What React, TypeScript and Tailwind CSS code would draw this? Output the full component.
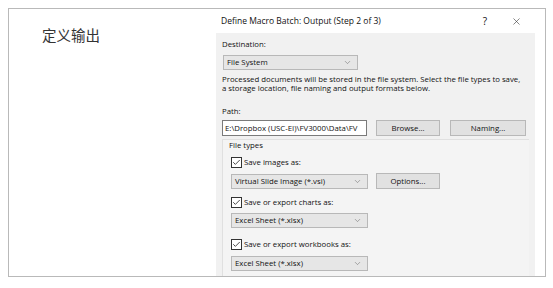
import { ChevronDown, Check, X } from "lucide-react";

const ui = { fontFamily: '"Open Sans", "DejaVu Sans", sans-serif' };

const Combo = ({ label, width }: { label: string; width: string }): JSX.Element => (
  <div
    className={`${width} h-[15px] flex items-center justify-between pl-[3px] pr-[5px] bg-[#e6e6e6] border border-[#b8b8b8] text-[#111]`}
  >
    <span>{label}</span>
    <ChevronDown className="w-[9px] h-[9px] text-[#666]" strokeWidth={1.4} />
  </div>
);

const Button = ({ label, width }: { label: string; width: string }): JSX.Element => (
  <div
    className={`${width} h-[16px] flex items-center justify-center bg-[#e1e1e1] border border-[#b8b8b8] text-[#111]`}
  >
    {label}
  </div>
);

const CheckRow = ({ label }: { label: string }): JSX.Element => (
  <div className="h-[11px] flex items-center gap-[2px] text-[#111]">
    <div className="w-[11px] h-[11px] border border-[#333] bg-white flex items-center justify-center">
      <Check className="w-[9px] h-[9px] text-[#222]" strokeWidth={2.2} />
    </div>
    <span>{label}</span>
  </div>
);

export default function App(): JSX.Element {
  return (
    <div className="w-[553px] h-[288px] bg-white pt-[8px] pl-[8px]">
      <div className="w-[538px] h-[269px] border border-[#b9b9b9] flex overflow-hidden">
        {/* left title */}
        <div className="w-[207px] shrink-0 pl-[33px] pt-[16px]">
          <div
            className="text-[14.5px] text-[#333] leading-[20px]"
            style={{ fontFamily: '"Noto Sans CJK SC", sans-serif' }}
          >
            定义输出
          </div>
        </div>

        {/* dialog */}
        <div className="w-[319px] shrink-0 flex flex-col" style={ui}>
          <div className="h-[24px] shrink-0 flex items-center pl-[5px] text-[8.5px] text-[#111]">
            <span className="flex-1">Define Macro Batch: Output (Step 2 of 3)</span>
            <span className="w-[52px] text-center text-[10px]">?</span>
            <X className="w-[11px] h-[11px] mr-[13px] text-[#333]" strokeWidth={1.3} />
          </div>

          <div className="flex-1 overflow-hidden bg-[#f1f1f1] pl-[6px] pt-[6px] text-[7.8px] text-[#111] leading-[11px] whitespace-nowrap">
            <div>Destination:</div>
            <div className="mt-[5px] ml-[1px]">
              <Combo label="File System" width="w-[135px]" />
            </div>
            <div className="mt-[5px] leading-[9px]">
              Processed documents will be stored in the file system. Select the file types to save,
              <br />
              a storage location, file naming and output formats below.
            </div>

            <div className="mt-[13px]">Path:</div>
            <div className="mt-[3px] flex items-center">
              <div className="w-[145px] h-[16px] bg-white border border-[#7a7a7a] flex items-center pl-[2px] overflow-hidden">
                E:\Dropbox (USC-EI)\FV3000\Data\FV
              </div>
              <div className="ml-[9px]">
                <Button label="Browse..." width="w-[64px]" />
              </div>
              <div className="ml-[10px]">
                <Button label="Naming..." width="w-[76px]" />
              </div>
            </div>

            <div className="mt-[3px] mr-[6px] h-[140px] border-t border-l border-[#e0e0e0] bg-[#f4f4f4] pl-[6px]">
              <div>File types</div>
              <div className="mt-[6px] ml-[2px]">
                <CheckRow label="Save images as:" />
              </div>
              <div className="mt-[5px] ml-[2px] flex items-center">
                <Combo label="Virtual Slide Image (*.vsi)" width="w-[137px]" />
                <div className="ml-[8px]">
                  <Button label="Options..." width="w-[64px]" />
                </div>
              </div>
              <div className="mt-[8px] ml-[2px]">
                <CheckRow label="Save or export charts as:" />
              </div>
              <div className="mt-[5px] ml-[2px]">
                <Combo label="Excel Sheet (*.xlsx)" width="w-[137px]" />
              </div>
              <div className="mt-[11px] ml-[2px]">
                <CheckRow label="Save or export workbooks as:" />
              </div>
              <div className="mt-[6px] ml-[2px]">
                <Combo label="Excel Sheet (*.xlsx)" width="w-[137px]" />
              </div>
            </div>
          </div>
        </div>
      </div>
    </div>
  );
}
